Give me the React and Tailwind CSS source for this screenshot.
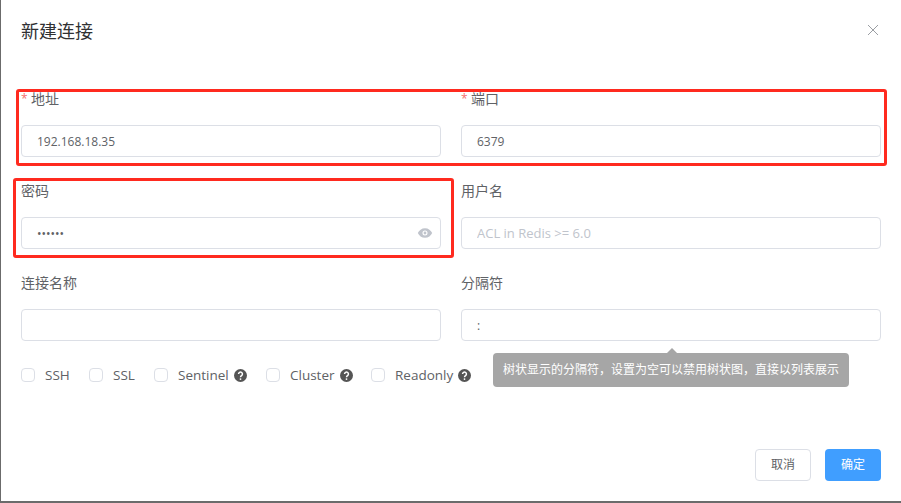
const font = "font-['Open_Sans','Noto_Sans_CJK_SC',sans-serif]";

function Field({ label, required, value, placeholder, eye, password }) {
  return (
    <div className="flex flex-col">
      <label className="h-10 mb-1.5 flex items-center text-sm text-[#606266]">
        {required && <span className="w-[10px] text-xs text-[#f56c6c]">*</span>}
        {label}
      </label>
      <div className="relative mb-3.5">
        <input
          readOnly
          type={password ? "password" : "text"}
          value={value || ""}
          placeholder={placeholder}
          className={`w-full h-8 px-[15px] ${placeholder ? "text-[13px]" : "text-xs"} text-[#606266] placeholder:text-[#c0c4cc] border border-[#dcdfe6] rounded outline-none`}
        />
        {eye && (
          <svg viewBox="0 0 24 24" className="absolute right-[8px] top-[8px] w-4 h-4 text-[#c0c4cc]" fill="currentColor">
            <path fillRule="evenodd" d="M12 4.8C7 4.8 3 8 1.2 12 3 16 7 19.2 12 19.2s9-3.2 10.8-7.2C21 8 17 4.8 12 4.8zm0 11a3.8 3.8 0 1 1 0-7.6 3.8 3.8 0 0 1 0 7.6zm0-1.7a2.1 2.1 0 1 0 0-4.2 2.1 2.1 0 0 0 0 4.2z" />
          </svg>
        )}
      </div>
    </div>
  );
}

function Help() {
  return (
    <svg viewBox="0 0 16 16" className="w-[13px] h-[13px] ml-[5px]">
      <circle cx="8" cy="8" r="8" fill="#555" />
      <path d="M5.6 6.2a2.4 2.4 0 1 1 3.6 2.1c-.8.5-1.2.8-1.2 1.7" fill="none" stroke="#fff" strokeWidth="1.8" />
      <circle cx="8" cy="12.4" r="1.1" fill="#fff" />
    </svg>
  );
}

function Check({ label, help, className }) {
  return (
    <div className={`flex items-center text-[13.5px] font-medium text-[#606266] ${className}`}>
      <span className="w-[14px] h-[14px] border border-[#dcdfe6] rounded-sm bg-white mr-[10px]" />
      {label}
      {help && <Help />}
    </div>
  );
}

export default function App() {
  return (
    <div className={`${font} relative w-[901px] h-[503px] bg-[#6b6b6b] pl-px pb-[2px] overflow-hidden`}>
      <div className="relative h-[501px] bg-white flex flex-col">
        <div className="flex justify-between items-center pl-5 pr-[22px] pt-[20px] h-[79px] pb-[37px]">
          <h1 className="text-lg font-normal text-[#303133] leading-[22px]">新建连接</h1>
          <svg viewBox="0 0 12 12" className="w-[12px] h-[12px] mb-[2px] text-[#909399]" fill="none" stroke="currentColor" strokeWidth="0.9">
            <path d="M1 1l10 10M11 1L1 11" />
          </svg>
        </div>

        <div className="grid grid-cols-2 gap-x-5 px-5">
          <Field required label="地址" value="192.168.18.35" />
          <Field required label="端口" value="6379" />
          <Field label="密码" value="123456" password eye />
          <Field label="用户名" placeholder="ACL in Redis >= 6.0" />
          <Field label="连接名称" />
          <Field label="分隔符" value=":" />
        </div>

        <div className="flex items-center px-5 h-10">
          <Check label="SSH" className="w-[68px]" />
          <Check label="SSL" className="w-[65px]" />
          <Check label="Sentinel" help className="w-[112px]" />
          <Check label="Cluster" help className="w-[105px]" />
          <Check label="Readonly" help />
        </div>

        <div className="mt-auto flex justify-end gap-[14px] px-5 pb-5">
          <button className="w-14 h-8 text-xs text-[#606266] border border-[#dcdfe6] rounded bg-white">取消</button>
          <button className="w-14 h-8 text-xs text-white bg-[#409eff] rounded">确定</button>
        </div>

        {/* tooltip */}
        <div className="absolute left-[492px] top-[353px] w-[356px] h-[34px] bg-[#a6a6a6] rounded flex items-center justify-center text-xs text-white">
          树状显示的分隔符，设置为空可以禁用树状图，直接以列表展示
          <span className="absolute left-[173px] -top-[5px] w-0 h-0 border-x-[6px] border-x-transparent border-b-[6px] border-b-[#a6a6a6]" />
        </div>

        {/* red annotation boxes */}
        <div className="absolute left-[15px] top-[89px] w-[871px] h-[77px] border-[3px] border-[#ff2a1f] rounded-[3px]" />
        <div className="absolute left-[12px] top-[178px] w-[441px] h-[80px] border-[3px] border-[#ff2a1f] rounded-[3px]" />
      </div>
    </div>
  );
}
